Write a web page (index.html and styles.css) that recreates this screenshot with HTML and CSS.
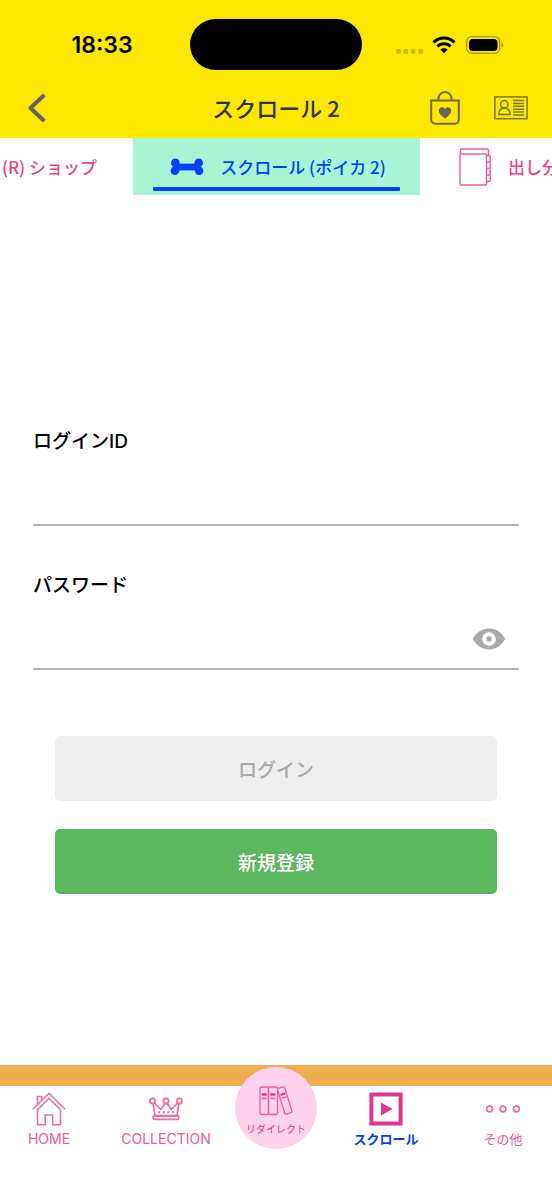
FILE: index.html
```html
<!DOCTYPE html>
<html lang="ja">
<head>
<meta charset="utf-8">
<meta name="viewport" content="width=device-width, initial-scale=1">
<title>スクロール 2</title>
<link rel="stylesheet" href="styles.css">
</head>
<body>
<header class="header">
  <div class="status">
    <div class="status-time">18:33</div>
    <div class="status-island"></div>
    <div class="status-icons">
      <svg width="28" height="6" viewBox="0 0 28 6" fill="#ccba00"><rect x="0" y="1" width="5" height="5" rx="2"/><rect x="7.3" y="1" width="5" height="5" rx="2"/><rect x="14.6" y="1" width="5" height="5" rx="2"/><rect x="22" y="1" width="5" height="5" rx="2"/></svg>
      <svg class="wifi" width="24" height="18" viewBox="0 0 24 18" fill="none" stroke="#000" stroke-width="3"><path d="M1.500 6.400a15 15 0 0 1 21 0"/><path d="M5.400 10.500a9.400 9.400 0 0 1 13.200 0"/><path d="M12 17.300 8.400 13.700a5.100 5.100 0 0 1 7.200 0z" fill="#000" stroke="none"/></svg>
      <svg width="38" height="18" viewBox="0 0 38 18"><rect x=".7" y=".7" width="33" height="16.600" rx="5" fill="none" stroke="#a09200" stroke-width="1.200"/><rect x="3" y="3" width="28.500" height="12" rx="3.500"/><path d="M35.500 6.400q2 1 2 2.600t-2 2.600z" fill="#a09200"/></svg>
    </div>
  </div>
  <div class="bar">
    <button class="icon-button" type="button" aria-label="戻る">
      <svg width="18" height="30" viewBox="0 0 18 30" fill="none" stroke="#646464" stroke-width="4" stroke-linecap="round" stroke-linejoin="round"><path d="M15.200 3 2.500 15l12.700 12"/></svg>
    </button>
    <h1 class="title">スクロール 2</h1>
    <div class="actions">
      <button class="icon-button" type="button" aria-label="お気に入りショップ">
        <svg width="30" height="34" viewBox="0 0 30 34" fill="none" stroke="#6d6a4c" stroke-width="2"><path d="M1.200 9.500h27.600v19.300a4 4 0 0 1-4 4H5.200a4 4 0 0 1-4-4z"/><path d="M8.500 9.500V7.500a6.500 6.500 0 0 1 13 0v2"/><path d="M15 27.500C11 24.500 8.800 22.500 8.800 19.700c0-3.800 4.500-4.700 6.200-1.700 1.700-3 6.200-2.100 6.200 1.700 0 2.800-2.200 4.800-6.200 7.800z" fill="#646464" stroke="none"/></svg>
      </button>
      <button class="icon-button" type="button" aria-label="会員証">
        <svg width="34" height="24" viewBox="0 0 34 24" fill="none" stroke="#7d753c" stroke-width="1.500"><rect x=".9" y=".9" width="32.200" height="21.800"/><circle cx="10.300" cy="8.300" r="3.700"/><path d="M4.700 18.500c0-4 2.300-6.300 5.600-6.300s5.700 2.300 5.700 6.300z"/><path d="M19 4.500h11M19 7.400h11M19 10.300h11M19 13.200h11M19 16.100h11M19 19h11"/></svg>
      </button>
    </div>
  </div>
</header>

<nav class="tabs" aria-label="カテゴリー">
  <a class="tab tab-prev" href="#shop">(R) ショップ</a>
  <a class="tab tab-active" href="#scroll" aria-current="page">
    <svg width="34" height="18" viewBox="0 0 34 18" fill="#0040ff"><path d="M5 5.600h24v6.800H5z"/><circle cx="5.300" cy="4.900" r="4.300"/><circle cx="4.900" cy="12.800" r="4.300"/><circle cx="28.700" cy="4.900" r="4.300"/><circle cx="29.100" cy="12.800" r="4.300"/></svg>
    <span>スクロール (ポイカ 2)</span>
  </a>
  <a class="tab tab-next" href="#separate">
    <svg width="33" height="38" viewBox="0 0 33 38" fill="none" stroke="#ef5f9f" stroke-width="1.500"><rect x="1" y="6" width="26.500" height="31" rx="1"/><path d="M1.500 6V2.500Q1.500 1 3 1h25q1.500 0 1.500 1.500v4.800M27.500 7.500h2.300q1.500 0 1.500 1.500v3.500q0 1.500-1.500 1.500h-2.300M29.800 14q1.500 0 1.500 1.500V19q0 1.500-1.500 1.500h-2.300M29.800 20.500q1.500 0 1.500 1.500v3.500q0 1.500-1.500 1.500h-2.300M29.800 27q1.500 0 1.500 1.500V32q0 1.500-1.500 1.500h-2.300"/></svg>
    <span>出し分け</span>
  </a>
</nav>

<main class="main">
  <form class="form">
    <div class="field">
      <label for="login-id">ログインID</label>
      <div class="control"><input id="login-id" type="text" autocomplete="username"></div>
    </div>
    <div class="field">
      <label for="password">パスワード</label>
      <div class="control">
        <input id="password" type="password" autocomplete="current-password">
        <button class="icon-button" type="button" aria-label="パスワードを表示">
          <svg width="34" height="22" viewBox="0 0 34 22"><path d="M.8 11C4.500 4.500 10 .6 17 .6S29.500 4.500 33.200 11C29.500 17.500 24 21.400 17 21.400S4.500 17.500.8 11z" fill="#aaa"/><circle cx="17" cy="11" r="6.800" fill="#fff"/><circle cx="17" cy="11" r="2.700" fill="#aaa"/></svg>
        </button>
      </div>
    </div>
    <div class="buttons">
      <button class="button button-login" type="submit" disabled>ログイン</button>
      <button class="button button-register" type="button">新規登録</button>
    </div>
  </form>
</main>

<footer class="footer">
  <div class="band"></div>
  <nav class="bottom-nav" aria-label="メイン">
    <a class="nav-item nav-latin" href="#home">
      <svg width="34" height="34" viewBox="0 0 34 34" fill="none" stroke="#f06aa6" stroke-width="1.600"><path d="M.9 17.200 17 1.300l16.100 15.900"/><path d="M5.500 17.800V32.800h7.800V23h7.400v9.800h7.800v-15L17 6.300z"/><path d="M5.500 12.500v-8h4.300v3.700"/></svg>
      <span>HOME</span>
    </a>
    <a class="nav-item nav-latin" href="#collection">
      <svg width="34" height="34" viewBox="0 0 34 34" fill="none" stroke="#f06aa6" stroke-width="1.700"><circle cx="3.500" cy="9" r="2.600"/><circle cx="17" cy="9" r="2.600"/><circle cx="30.500" cy="9" r="2.600"/><path d="m4 11.600 2.200 12.500h21.600L30 11.600M5.300 11l6.500 6.500 4-6m2.400 0 4 6 6.500-6.500"/><rect x="4.200" y="23.500" width="25.600" height="3.800" rx="1.800"/><path d="M9 20.300h2m2.700 0h2m2.600 0h2m2.700 0h2" stroke-width="2"/></svg>
      <span>COLLECTION</span>
    </a>
    <a class="nav-item nav-center" href="#redirect">
      <svg width="34" height="30" viewBox="0 0 34 30" fill="none" stroke="#ec5aa3" stroke-width="1.300"><rect x="1" y="1" width="8.500" height="27.500" rx="1.500"/><rect x="9.500" y="1" width="9" height="27.500" rx="1.500"/><rect x="22" y="1" width="7.500" height="27" rx="1.500" transform="rotate(-17 25.700 14.500)"/><path d="M2.700 12.500h5M11.300 12.500h5M22.700 12.200l5-1.600"/><path d="M2.700 8.500h5M11.300 8.500h5M21.500 9l4.800-1.600" stroke="#df358f" stroke-width="2.300"/></svg>
      <span>リダイレクト</span>
    </a>
    <a class="nav-item nav-active" href="#scroll" aria-current="page">
      <svg width="34" height="34" viewBox="0 0 34 34"><path d="M2.400 2.400h29.200v29.200H2.400z" fill="none" stroke="#df358f" stroke-width="4"/><path d="M12 10.500v13l11.500-6.500z" fill="#df358f"/></svg>
      <span>スクロール</span>
    </a>
    <a class="nav-item" href="#other">
      <svg width="34" height="34" viewBox="0 0 34 34" fill="none" stroke="#f06aa6" stroke-width="1.600"><circle cx="3.600" cy="17" r="2.900"/><circle cx="17" cy="17" r="2.900"/><circle cx="30.400" cy="17" r="2.900"/></svg>
      <span>その他</span>
    </a>
  </nav>
</footer>
</body>
</html>
```
FILE: styles.css
```css
* {
  box-sizing: border-box;
}

body {
  margin: 0;
  min-height: 100vh;
  display: flex;
  flex-direction: column;
  background: #fff;
  color: #000;
  font-family: Inter, "Noto Sans CJK JP", sans-serif;
}

svg {
  display: block;
  flex: none;
}

a {
  color: inherit;
  text-decoration: none;
}

.icon-button {
  display: flex;
  padding: 0;
  border: 0;
  background: none;
}

.header {
  background: #ffe800;
}

.status,
.bar {
  display: grid;
  align-items: center;
}

.status {
  grid-template-columns: 1fr 172px 1fr;
  padding-top: 19px;
}

.status-time {
  padding-left: 14px;
  text-align: center;
  font-size: 23px;
  font-weight: 600;
  line-height: 28px;
}

.status-island {
  height: 51px;
  border-radius: 26px;
  background: #000;
}

.status-icons {
  display: flex;
  align-items: center;
  gap: 8px;
  padding-left: 34px;
}

.status-icons :first-child {
  margin-top: 12px;
}

.wifi {
  margin-right: 2px;
}

.bar {
  grid-template-columns: 1fr auto 1fr;
  height: 68px;
  padding: 8px 24px 0 28px;
}

.title {
  margin: 0;
  padding: 0 4px 2px 0;
  color: #333;
  font-family: "Noto Sans CJK JP", sans-serif;
  font-size: 22px;
  font-weight: 500;
  line-height: 32px;
}

.actions {
  display: flex;
  justify-content: flex-end;
  align-items: center;
  gap: 34px;
}

.tabs {
  display: grid;
  grid-template-columns: 133fr 287fr 132fr;
  height: 57px;
  overflow: hidden;
  color: #ea4489;
  font-family: "Noto Sans CJK JP", sans-serif;
  font-size: 17px;
  font-weight: 500;
  line-height: 24px;
  white-space: nowrap;
}

.tab {
  display: flex;
  align-items: center;
  gap: 16px;
  min-width: 0;
}

.tab-prev {
  justify-content: flex-end;
  padding-right: 36px;
}

.tab-active {
  position: relative;
  justify-content: center;
  padding-left: 3px;
  background: #a8f5d6;
  color: #0040ff;
}

.tab-active::after {
  content: "";
  position: absolute;
  right: 20px;
  bottom: 4px;
  left: 20px;
  height: 4px;
  border-radius: 1px;
  background: #0040ff;
}

.tab-next {
  padding-left: 39px;
}

.main {
  flex: 1;
  padding: 233px 33px 0;
}

.form,
.field,
.buttons {
  display: flex;
  flex-direction: column;
}

.form {
  gap: 46px;
}

.field label {
  font-size: 19px;
  font-weight: 500;
  line-height: 28px;
}

.control {
  display: flex;
  align-items: center;
  height: 70px;
  padding: 10px 13px 0 0;
  border-bottom: 2px solid #b4b4b4;
}

.control input {
  flex: 1;
  min-width: 0;
  height: 48px;
  padding: 0;
  border: 0;
  outline: 0;
  background: none;
  font: inherit;
  font-size: 19px;
}

.buttons {
  gap: 28px;
  padding: 20px 22px 0;
}

.button {
  height: 65px;
  border: 0;
  border-radius: 5px;
  font-family: "Noto Sans CJK JP", sans-serif;
  font-size: 19px;
  font-weight: 500;
}

.button-login {
  background: #eee;
  color: #aaa;
}

.button-register {
  background: #5cb85c;
  color: #fff;
}

.band {
  height: 21px;
  background: #f0ad4e;
}

.bottom-nav {
  display: grid;
  grid-template-columns: 49fr 68fr 42fr 68fr 49fr;
  align-items: start;
  height: 114px;
  color: #ec5aa0;
  font-size: 13px;
  line-height: 20px;
}

.nav-item {
  display: flex;
  flex-direction: column;
  align-items: center;
  gap: 3px;
  padding-top: 6px;
}

.nav-latin {
  font-size: 14px;
}

.nav-center {
  justify-self: center;
  width: 82px;
  height: 82px;
  margin-top: -19px;
  padding-top: 19px;
  border-radius: 50%;
  background: #ffd1ea;
  color: #df358f;
  font-size: 10px;
}

.nav-active {
  color: #0040ff;
  font-weight: 700;
}
```
